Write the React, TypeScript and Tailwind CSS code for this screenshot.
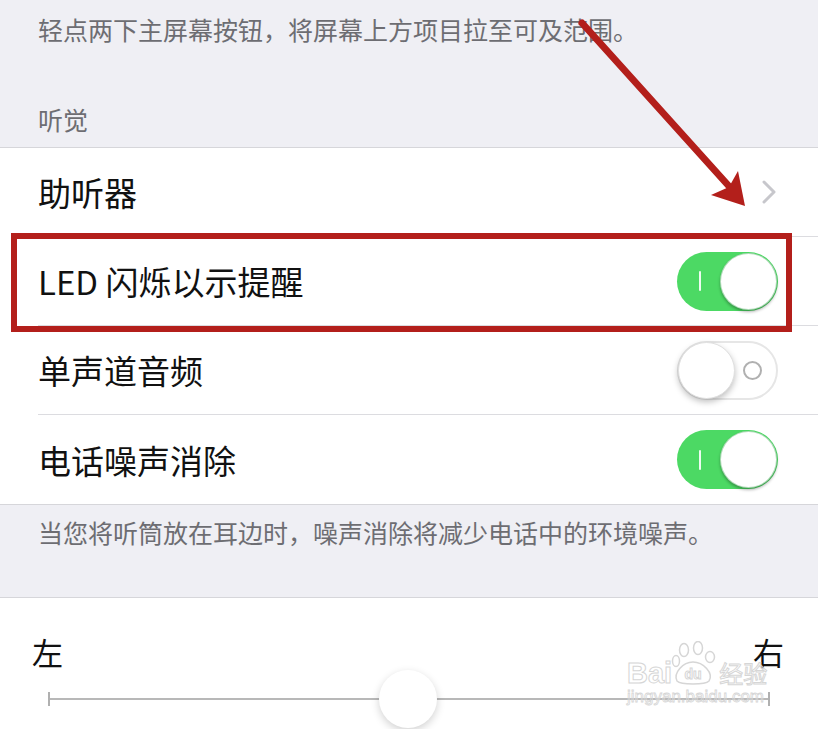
import React from "react";

const font = { fontFamily: '"Noto Sans CJK SC", "Noto Sans", sans-serif' };

function ToggleOn() {
  return (
    <div className="w-[101px] h-[59px] rounded-full bg-[#4cd964] shrink-0 flex items-center justify-between pl-[22px] pr-[1px]">
      <div className="w-[2px] h-[20px] bg-white/90 rounded" />
      <div className="w-[57px] h-[57px] rounded-full bg-white shadow-[0_2px_3px_rgba(0,0,0,0.3)] border border-[#3fa653]/40" />
    </div>
  );
}

function ToggleOff() {
  return (
    <div className="w-[101px] h-[59px] rounded-full bg-white border-2 border-[#e6e6e6] shrink-0 flex items-center justify-between pr-[14px]">
      <div className="-ml-[1px] w-[57px] h-[57px] rounded-full bg-white shadow-[0_3px_6px_rgba(0,0,0,0.25)] border border-[#e0e0e0]" />
      <div className="w-[19px] h-[19px] rounded-full border-2 border-[#b0b0b0]" />
    </div>
  );
}

function Row({ label, right, last }: { label: string; right: React.ReactNode; last?: boolean }) {
  return (
    <div className="h-[89px] pl-[38px] flex">
      <div className={"flex-1 flex items-center justify-between pr-[40px] " + (last ? "" : "border-b border-[#dcdce0]")}>
        <span className="text-[33px] leading-[40px] text-[#111]">{label}</span>
        {right}
      </div>
    </div>
  );
}

export default function App() {
  return (
    <div className="relative w-[818px] h-[729px] overflow-hidden bg-white" style={font}>
      {/* top grey */}
      <div className="h-[148px] bg-[#efeff4] pl-[38px] pt-[14px] border-b border-[#d6d6da]">
        <div className="text-[25px] leading-[30px] text-[#6d6d72]">轻点两下主屏幕按钮，将屏幕上方项目拉至可及范围。</div>
        <div className="mt-[60px] text-[25px] leading-[30px] text-[#6d6d72]">听觉</div>
      </div>

      {/* rows */}
      <div className="bg-white">
        <Row
          label="助听器"
          right={
            <svg width="16" height="26" viewBox="0 0 16 26" className="mr-[1px]">
              <polyline points="3,3 13,13 3,23" fill="none" stroke="#c7c7cc" strokeWidth="3" strokeLinecap="round" strokeLinejoin="round" />
            </svg>
          }
        />
        <Row label="LED 闪烁以示提醒" right={<ToggleOn />} />
        <Row label="单声道音频" right={<ToggleOff />} />
        <Row label="电话噪声消除" right={<ToggleOn />} last />
      </div>

      {/* bottom grey */}
      <div className="h-[94px] bg-[#efeff4] pl-[38px] pt-[12px] border-y border-[#d6d6da]">
        <div className="text-[25px] leading-[30px] text-[#6d6d72]">当您将听筒放在耳边时，噪声消除将减少电话中的环境噪声。</div>
      </div>

      {/* slider section */}
      <div className="px-[32px] pt-[34px]">
        <div className="flex justify-between text-[31px] leading-[40px] text-[#111] pr-[2px]">
          <span>左</span>
          <span>右</span>
        </div>
        <div className="relative mt-[20px] mx-[16px] h-[14px] flex items-center">
          <div className="w-[2px] h-[14px] bg-[#b0b0b0]" />
          <div className="flex-1 h-[2px] bg-[#b8b8b8]" />
          <div className="w-[2px] h-[14px] bg-[#b0b0b0]" />
          <div className="absolute left-[331px] top-[-22px] w-[58px] h-[58px] rounded-full bg-white shadow-[0_3px_8px_rgba(0,0,0,0.18)]" />
        </div>
      </div>

      {/* watermark */}
      <div className="absolute left-[627px] top-[641px] w-[160px] pointer-events-none whitespace-nowrap">
        <div className="flex items-end h-[45px]">
          <span className="text-[29px] leading-[26px] font-bold text-transparent [-webkit-text-stroke:1px_#d6d6d6]" style={{ fontFamily: '"Liberation Sans", sans-serif' }}>Bai</span>
          <svg width="46" height="45" viewBox="0 0 46 45" className="-ml-[1px]">
            <g fill="none" stroke="#d6d6d6" strokeWidth="1.5">
              <ellipse cx="13" cy="9" rx="4.5" ry="6.5" />
              <ellipse cx="27" cy="7" rx="4.5" ry="6.5" />
              <ellipse cx="39" cy="16" rx="4.5" ry="5.5" />
              <ellipse cx="5" cy="20" rx="3.5" ry="5.5" />
              <path d="M6 40 C2 32 12 21 22 21 C32 21 43 32 38 40 C34 44 10 44 6 40 Z" />
            </g>
            <text x="22" y="38" textAnchor="middle" fontSize="14" fontWeight="bold" fill="none" stroke="#d6d6d6" strokeWidth="1" fontFamily="Liberation Sans, sans-serif">du</text>
          </svg>
          <span className="ml-[2px] text-[24px] leading-[26px] text-transparent [-webkit-text-stroke:1px_#d6d6d6]">经验</span>
        </div>
        <div className="text-[17px] leading-[20px] mt-[1px] text-transparent [-webkit-text-stroke:0.8px_#d6d6d6]" style={{ fontFamily: '"Liberation Sans", sans-serif' }}>jingyan.baidu.com</div>
      </div>

      {/* red box annotation */}
      <div className="absolute left-[11px] top-[233px] w-[781px] h-[99px] border-[6px] border-[#b31f1b]" />

      {/* red arrow annotation */}
      <svg className="absolute left-0 top-0" width="818" height="729" viewBox="0 0 818 729">
        <line x1="582" y1="23" x2="736" y2="194" stroke="#b31f1b" strokeWidth="7" strokeLinecap="round" />
        <polygon points="745,206 711,195 729,187 738,171" fill="#b31f1b" />
      </svg>
    </div>
  );
}
